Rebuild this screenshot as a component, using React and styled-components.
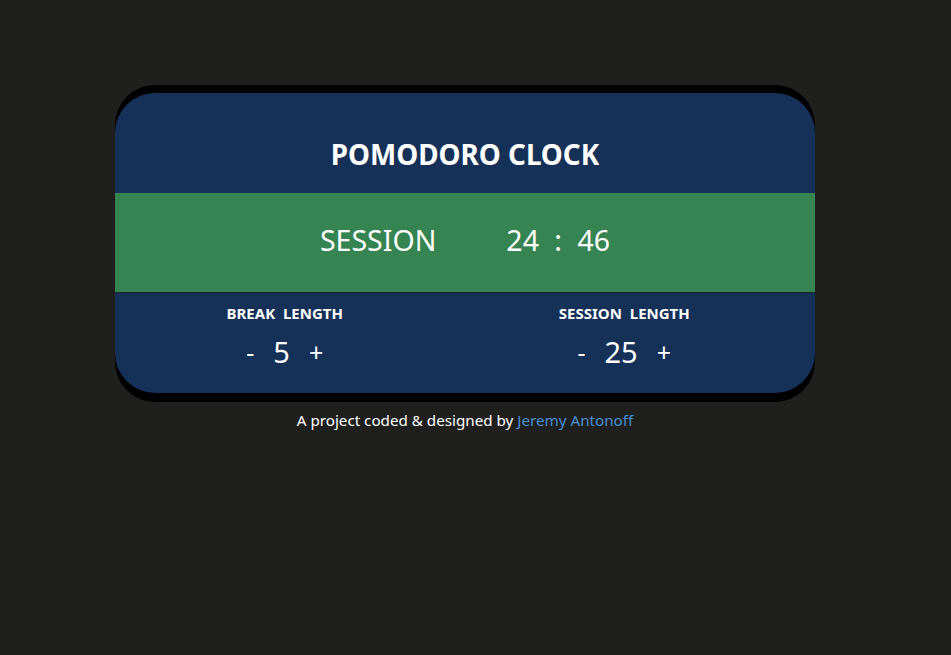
import React, { useState } from "react";
import styled, { createGlobalStyle } from "styled-components";

const GlobalStyle = createGlobalStyle`
  html, body {
    margin: 0;
    background: #1f1f1e;
    font-family: "Noto Sans", "Open Sans", sans-serif;
    color: #ffffff;
  }
`;

const Page = styled.div`
  width: 930px;
  padding-top: 93px;
`;

const Card = styled.div`
  width: 700px;
  margin: 0 auto;
  border-radius: 40px;
  overflow: hidden;
  background: #163158;
  box-shadow: 0 -8px 0 #000, 0 9px 0 #000;
`;

const Header = styled.h1`
  margin: 0;
  height: 100px;
  display: flex;
  align-items: center;
  justify-content: center;
  padding-top: 22px;
  box-sizing: border-box;
  font-size: 27.8px;
  font-weight: 700;
`;

const Display = styled.div`
  height: 100px;
  background: #358451;
  border-bottom: 1px solid #0f2a1a;
  display: flex;
  align-items: center;
  justify-content: center;
  gap: 70px;
  font-size: 28.5px;
  padding-bottom: 5px;
  box-sizing: border-box;
`;

const Time = styled.span`
  word-spacing: 8px;
`;

const Settings = styled.div`
  height: 100px;
  display: grid;
  grid-template-columns: 1fr 1fr;
  padding-right: 21px;
  padding-top: 10px;
  box-sizing: border-box;
`;

const Setting = styled.div`
  display: flex;
  flex-direction: column;
  align-items: center;
`;

const Label = styled.div`
  font-size: 15px;
  font-weight: 700;
  word-spacing: 4px;
`;

const Controls = styled.div`
  display: flex;
  align-items: center;
  gap: 19px;
  margin-top: 9px;
`;

const Button = styled.button`
  background: none;
  border: none;
  color: #fff;
  font-family: inherit;
  font-size: 25px;
  padding: 0;
  cursor: pointer;
`;

const Value = styled.span`
  font-size: 29px;
`;

const Footer = styled.p`
  margin: 17px 0 0;
  text-align: center;
  font-size: 15.2px;
  a {
    color: #4a8fd0;
    text-decoration: none;
  }
`;

const App = () => {
  const [breakLen, setBreakLen] = useState(5);
  const [sessionLen, setSessionLen] = useState(25);

  return (
    <Page>
      <GlobalStyle />
      <Card>
        <Header>POMODORO CLOCK</Header>
        <Display>
          <span>SESSION</span>
          <Time>24 : 46</Time>
        </Display>
        <Settings>
          <Setting>
            <Label>BREAK LENGTH</Label>
            <Controls>
              <Button onClick={() => setBreakLen(Math.max(1, breakLen - 1))}>-</Button>
              <Value>{breakLen}</Value>
              <Button onClick={() => setBreakLen(breakLen + 1)}>+</Button>
            </Controls>
          </Setting>
          <Setting>
            <Label>SESSION LENGTH</Label>
            <Controls>
              <Button onClick={() => setSessionLen(Math.max(1, sessionLen - 1))}>-</Button>
              <Value>{sessionLen}</Value>
              <Button onClick={() => setSessionLen(sessionLen + 1)}>+</Button>
            </Controls>
          </Setting>
        </Settings>
      </Card>
      <Footer>
        A project coded &amp; designed by <a href="#">Jeremy Antonoff</a>
      </Footer>
    </Page>
  );
};

export default App;
